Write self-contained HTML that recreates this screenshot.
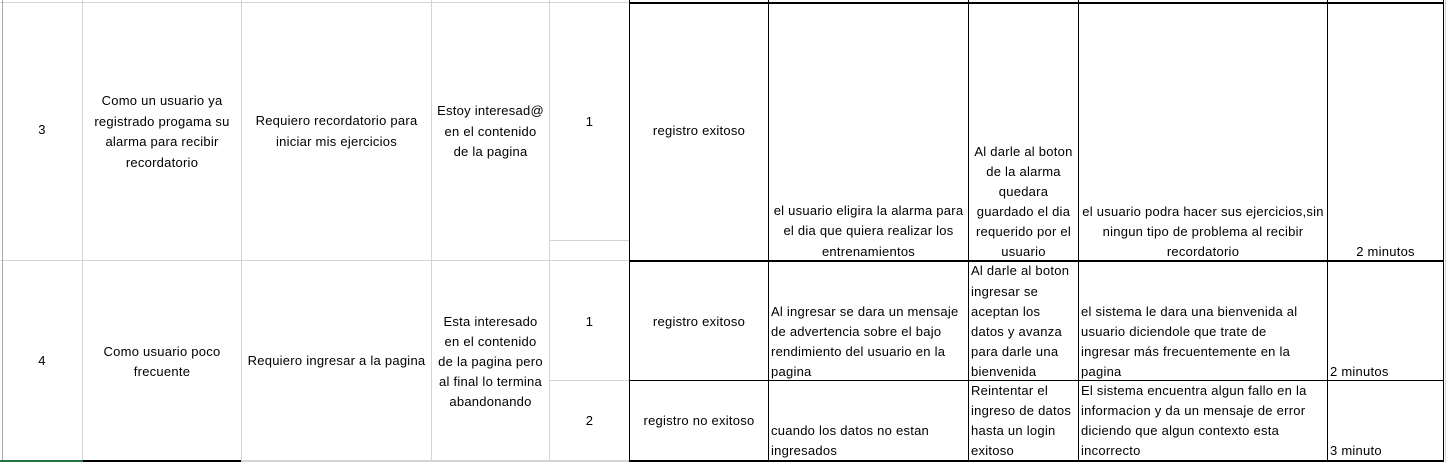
<!DOCTYPE html>
<html><head><meta charset="utf-8"><style>
body{margin:0;width:1446px;height:462px;background:#fff;position:relative;overflow:hidden;font-family:"Liberation Sans",sans-serif;font-size:13px;color:#000;letter-spacing:0.25px}
.g{position:absolute;background:#d4d4d4}
.b{position:absolute;background:#000}
.t{position:absolute;white-space:nowrap;line-height:20px;height:20px}
.c{text-align:center}
</style></head><body>
<div class="g" style="left:0;top:2px;width:629px;height:1px"></div>
<div class="g" style="left:0;top:260px;width:629px;height:1px"></div>
<div class="g" style="left:549px;top:240px;width:80px;height:1px"></div>
<div class="g" style="left:549px;top:380px;width:80px;height:1px"></div>
<div class="g" style="left:241px;top:460px;width:388px;height:2px"></div>
<div class="g" style="left:2px;top:0;width:1px;height:462px;background:#a8a8a8"></div>
<div class="g" style="left:82px;top:0;width:1px;height:462px"></div>
<div class="g" style="left:241px;top:0;width:1px;height:462px"></div>
<div class="g" style="left:431px;top:0;width:1px;height:462px"></div>
<div class="g" style="left:549px;top:0;width:1px;height:462px"></div>
<div class="g" style="left:1445px;top:0;width:1px;height:462px"></div>
<div class="b" style="left:629px;top:2px;width:815px;height:2px"></div>
<div class="b" style="left:629px;top:260px;width:815px;height:2px"></div>
<div class="b" style="left:629px;top:380px;width:815px;height:1px"></div>
<div class="b" style="left:629px;top:460px;width:815px;height:2px"></div>
<div class="b" style="left:83px;top:460px;width:158px;height:2px"></div>
<div class="b" style="left:0;top:460px;width:83px;height:2px;background:#217346"></div>
<div class="b" style="left:629px;top:0;width:1px;height:462px"></div>
<div class="b" style="left:768px;top:0;width:1px;height:462px"></div>
<div class="b" style="left:968px;top:0;width:1px;height:462px"></div>
<div class="b" style="left:1078px;top:0;width:1px;height:462px"></div>
<div class="b" style="left:1327px;top:0;width:1px;height:462px"></div>
<div class="b" style="left:1443px;top:0;width:1px;height:462px"></div>

<div class="t c" style="left:2px;width:80px;top:120px">3</div>
<div class="t c" style="left:83px;width:158px;top:91px">Como un usuario ya</div>
<div class="t c" style="left:83px;width:158px;top:112px">registrado progama su</div>
<div class="t c" style="left:83px;width:158px;top:132px">alarma para recibir</div>
<div class="t c" style="left:83px;width:158px;top:153px">recordatorio</div>
<div class="t c" style="left:242px;width:189px;top:111px">Requiero recordatorio para</div>
<div class="t c" style="left:242px;width:189px;top:132px">iniciar mis ejercicios</div>
<div class="t c" style="left:432px;width:117px;top:101px">Estoy interesad@</div>
<div class="t c" style="left:432px;width:117px;top:122px">en el contenido</div>
<div class="t c" style="left:432px;width:117px;top:142px">de la pagina</div>
<div class="t c" style="left:550px;width:79px;top:112px">1</div>
<div class="t c" style="left:630px;width:138px;top:121px">registro exitoso</div>
<div class="t c" style="left:769px;width:199px;top:201px">el usuario eligira la alarma para</div>
<div class="t c" style="left:769px;width:199px;top:221px">el dia que quiera realizar los</div>
<div class="t c" style="left:769px;width:199px;top:242px">entrenamientos</div>
<div class="t c" style="left:969px;width:109px;top:142px">Al darle al boton</div>
<div class="t c" style="left:969px;width:109px;top:162px">de la alarma</div>
<div class="t c" style="left:969px;width:109px;top:182px">quedara</div>
<div class="t c" style="left:969px;width:109px;top:202px">guardado el dia</div>
<div class="t c" style="left:969px;width:109px;top:222px">requerido por el</div>
<div class="t c" style="left:969px;width:109px;top:242px">usuario</div>
<div class="t c" style="left:1079px;width:248px;top:202px">el usuario podra hacer sus ejercicios,sin</div>
<div class="t c" style="left:1079px;width:248px;top:222px">ningun tipo de problema al recibir</div>
<div class="t c" style="left:1079px;width:248px;top:242px">recordatorio</div>
<div class="t c" style="left:1328px;width:115px;top:242px">2 minutos</div>

<div class="t c" style="left:2px;width:80px;top:351px">4</div>
<div class="t c" style="left:83px;width:158px;top:342px">Como usuario poco</div>
<div class="t c" style="left:83px;width:158px;top:362px">frecuente</div>
<div class="t c" style="left:242px;width:189px;top:351px">Requiero ingresar a la pagina</div>
<div class="t c" style="left:432px;width:117px;top:312px">Esta interesado</div>
<div class="t c" style="left:432px;width:117px;top:332px">en el contenido</div>
<div class="t c" style="left:432px;width:117px;top:352px">de la pagina pero</div>
<div class="t c" style="left:432px;width:117px;top:372px">al final lo termina</div>
<div class="t c" style="left:432px;width:117px;top:392px">abandonando</div>
<div class="t c" style="left:550px;width:79px;top:312px">1</div>
<div class="t c" style="left:550px;width:79px;top:411px">2</div>
<div class="t c" style="left:630px;width:138px;top:312px">registro exitoso</div>
<div class="t c" style="left:630px;width:138px;top:411px">registro no exitoso</div>
<div class="t" style="left:771px;top:302px">Al ingresar se dara un mensaje</div>
<div class="t" style="left:771px;top:322px">de advertencia sobre el bajo</div>
<div class="t" style="left:771px;top:342px">rendimiento del usuario en la</div>
<div class="t" style="left:771px;top:362px">pagina</div>
<div class="t" style="left:771px;top:421px">cuando los datos no estan</div>
<div class="t" style="left:771px;top:441px">ingresados</div>
<div class="t" style="left:971px;top:261px">Al darle al boton</div>
<div class="t" style="left:971px;top:282px">ingresar se</div>
<div class="t" style="left:971px;top:302px">aceptan los</div>
<div class="t" style="left:971px;top:322px">datos y avanza</div>
<div class="t" style="left:971px;top:342px">para darle una</div>
<div class="t" style="left:971px;top:362px">bienvenida</div>
<div class="t" style="left:971px;top:381px">Reintentar el</div>
<div class="t" style="left:971px;top:401px">ingreso de datos</div>
<div class="t" style="left:971px;top:421px">hasta un login</div>
<div class="t" style="left:971px;top:441px">exitoso</div>
<div class="t" style="left:1081px;top:302px">el sistema le dara una bienvenida al</div>
<div class="t" style="left:1081px;top:322px">usuario diciendole que trate de</div>
<div class="t" style="left:1081px;top:342px">ingresar más frecuentemente en la</div>
<div class="t" style="left:1081px;top:362px">pagina</div>
<div class="t" style="left:1081px;top:381px">El sistema encuentra algun fallo en la</div>
<div class="t" style="left:1081px;top:401px">informacion y da un mensaje de error</div>
<div class="t" style="left:1081px;top:421px">diciendo que algun contexto esta</div>
<div class="t" style="left:1081px;top:441px">incorrecto</div>
<div class="t" style="left:1330px;top:362px">2 minutos</div>
<div class="t" style="left:1330px;top:441px">3 minuto</div>
</body></html>
